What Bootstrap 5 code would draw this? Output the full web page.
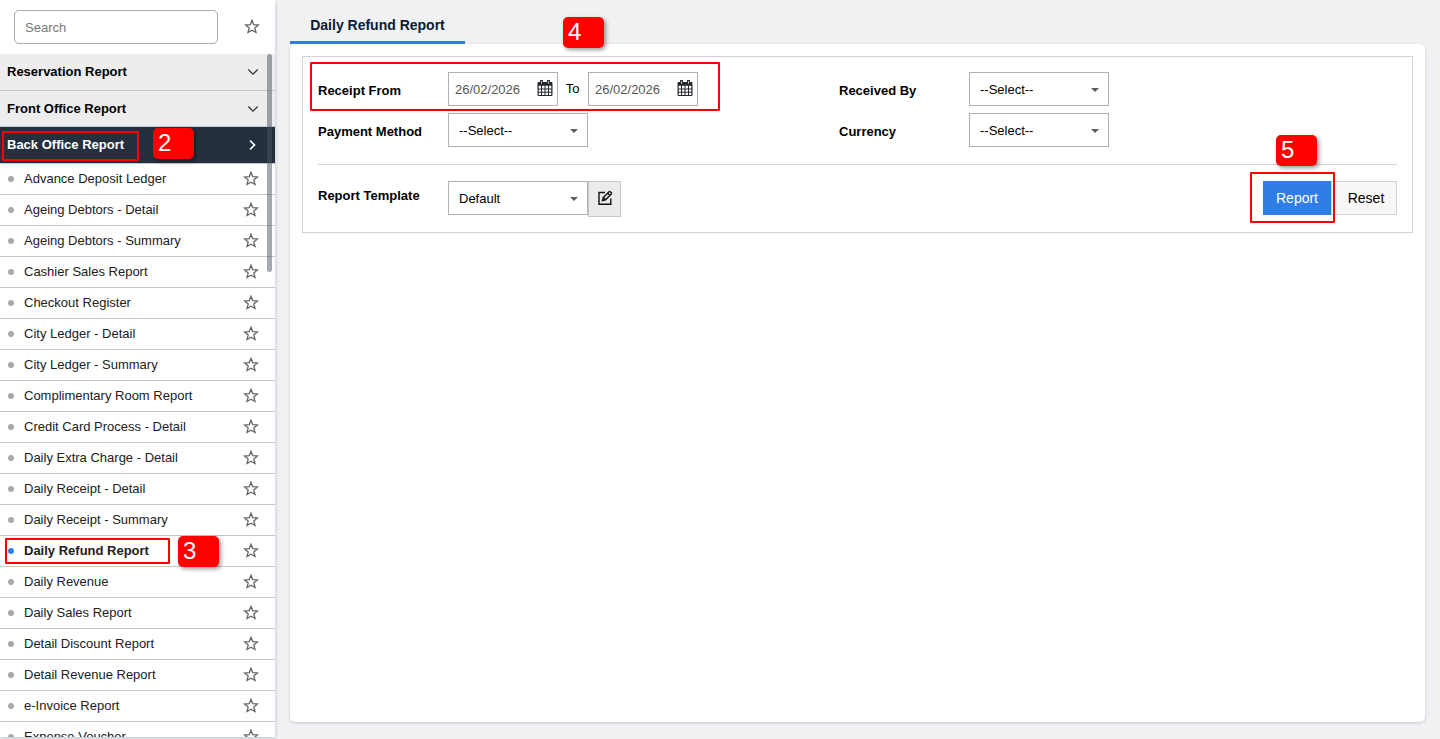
<!DOCTYPE html>
<html lang="en">

<head>
    <meta charset="UTF-8">
    <meta name="viewport" content="width=device-width, initial-scale=1.0">
    <title>Daily Refund Report</title>
    <link href="https://cdn.jsdelivr.net/npm/bootstrap@5.3.3/dist/css/bootstrap.min.css" rel="stylesheet">
    <style>
        body {
            height: 739px;
            background: #f0f1f3;
            color: #000;
            font: 13px/18px "Liberation Sans", Arial, sans-serif;
        }

        .report-sidebar {
            width: 275px;
            height: 737px;
            background: #fff;
            box-shadow: 0 1px 4px rgba(60, 75, 95, 0.3);
        }

        .search-bar {
            height: 54px;
            padding: 0 15px 0 14px;
        }

        .search-bar .form-control {
            width: 204px;
            height: 34px;
            padding: 0 10px;
            border: 1px solid #aaabae;
            border-radius: 5px;
            font-size: 13px;
        }

        .search-bar .form-control::placeholder {
            color: #777;
        }

        .group-head {
            height: 37px;
            padding: 0 16px 0 7px;
            background: #ededed;
            border-bottom: 1px solid #c5c8ca;
            font-weight: bold;
        }

        .group-head.second {
            height: 36px;
        }

        .group-head.open {
            background: #25303f;
            color: #fff;
            padding-bottom: 1px;
        }

        .report-items {
            height: 573px;
        }

        .report-list .list-group-item {
            height: 31px;
            padding: 0 16px 1px 8px;
            border: 0;
            border-bottom: 1px solid #c5c8ca;
            color: #212121;
        }

        .report-list .dot {
            width: 6px;
            height: 6px;
            margin-right: 10px;
            border-radius: 50%;
            background: #a9a9a9;
        }

        .report-list .current {
            font-weight: bold;
        }

        .report-list .current .dot {
            background: #2f7de6;
        }

        .scroll-thumb {
            left: 267px;
            top: 54px;
            width: 5px;
            height: 218px;
            border-radius: 3px;
            background: rgba(73, 84, 98, 0.5);
        }

        .report-main {
            padding: 9px 15px 17px 15px;
        }

        .report-tab {
            width: 175px;
            height: 35px;
            border-bottom: 3px solid #2f7de6;
            color: #0b1a33;
            font-size: 14px;
            font-weight: bold;
        }

        .report-panel {
            padding: 12px;
            background: #fff;
            border-radius: 5px;
            box-shadow: 0 1px 3px rgba(60, 75, 95, 0.25);
        }

        .filter-box {
            height: 177px;
            padding: 15px;
            border: 1px solid #d2d3d8;
        }

        .filter-col {
            width: 521px;
        }

        .filter-label {
            width: 130px;
            font-weight: bold;
            padding-top: 4px;
        }

        .filter-line {
            height: 34px;
            margin-bottom: 7px;
        }

        .date-box {
            width: 110px;
            height: 34px;
            padding: 2px 4px 0 6px;
            border: 1px solid #aeb0b6;
            color: #555;
        }

        .date-box svg {
            margin-bottom: 5px;
        }

        .to-label {
            width: 30px;
            padding-right: 1px;
        }

        .select-box {
            width: 140px;
            height: 34px;
            padding: 1px 9px 0 10px;
            border: 1px solid #aeb0b6;
        }

        .select-box::after {
            content: "";
            border: 4px solid transparent;
            border-top-color: #5e5e5e;
            border-bottom: 0;
        }

        .template-row {
            margin-top: 10px;
            padding-top: 16px;
            border-top: 1px solid #d2d3d8;
        }

        .template-row .filter-label {
            padding-top: 6px;
        }

        .edit-btn {
            width: 33px;
            height: 36px;
            padding-bottom: 2px;
            background: #ebebeb;
            border: 1px solid #c8c8c8;
        }

        .template-row .btn {
            height: 34px;
            padding: 0;
            border-radius: 0;
            font-size: 14px;
        }

        .template-row .btn-report {
            width: 68px;
            background: #2f7de6;
            color: #fff;
        }

        .template-row .btn-reset {
            width: 66px;
            padding-left: 4px;
            background: #f7f7f7;
            border: 1px solid #d2d3d8;
            color: #000;
        }

        /* numbered callouts drawn over the screen */
        .callout-box {
            position: absolute;
            border: 2px solid #f00;
            border-radius: 1px;
        }

        .callout-num {
            position: absolute;
            width: 41px;
            height: 31px;
            padding-left: 5px;
            border-radius: 5px;
            background: #f00;
            box-shadow: 2px 2px 4px rgba(0, 0, 0, 0.4);
            color: #fff;
            font-size: 24px;
            line-height: 29px;
        }

        .box-2 { left: 2px; top: 131px; width: 137px; height: 30px; }
        .box-3 { left: 5px; top: 538px; width: 165px; height: 26px; }
        .box-4 { left: 310px; top: 62px; width: 410px; height: 49px; }
        .box-5 { left: 1250px; top: 172px; width: 85px; height: 51px; }
        .num-2 { left: 153px; top: 128px; }
        .num-3 { left: 178px; top: 536px; }
        .num-4 { left: 563px; top: 17px; }
        .num-5 { left: 1276px; top: 135px; }
    </style>
</head>

<body class="d-flex overflow-hidden position-relative">

    <svg class="d-none">
        <symbol id="star" viewBox="0 0 16 16">
            <path d="M8 1.300l1.700 4.300 4.700.4-3.600 3 1.200 4.500L8 11.200l-4 2.300L5.200 9 1.600 6l4.700-.4z" fill="none" stroke="#666" stroke-width="1.3" />
        </symbol>
        <symbol id="chevron" viewBox="0 0 12 12">
            <path d="M1.300 3.500L6 8.200l4.700-4.700" fill="none" stroke="#2b2f36" stroke-width="1.2" />
        </symbol>
        <symbol id="calendar" viewBox="0 0 16 16">
            <rect x="1.100" y="2.600" width="13.800" height="12.900" rx=".8" fill="#fff" stroke="#25282d" stroke-width="1.2" />
            <path d="M1 2.200h14v3.600H1z" fill="#25282d" />
            <path d="M4.500 5.500v10M8 5.500v10M11.500 5.500v10M1 9h14M1 12.200h14" stroke="#25282d" />
            <path d="M4.500 1v2.800M11.500 1v2.800" stroke="#25282d" stroke-width="3" stroke-linecap="round" />
            <path d="M4.500 1.200v2.400M11.500 1.200v2.400" stroke="#d5d5d5" stroke-width="1" />
        </symbol>
    </svg>

    <aside class="report-sidebar flex-shrink-0 position-relative">
        <div class="search-bar d-flex align-items-center justify-content-between">
            <input type="text" class="form-control" placeholder="Search">
            <svg width="16" height="16"><use href="#star" /></svg>
        </div>
        <div class="group-head d-flex align-items-center justify-content-between">
            Reservation Report
            <svg width="12" height="12"><use href="#chevron" /></svg>
        </div>
        <div class="group-head second d-flex align-items-center justify-content-between">
            Front Office Report
            <svg width="12" height="12"><use href="#chevron" /></svg>
        </div>
        <div class="group-head open d-flex align-items-center justify-content-between">
            Back Office Report
            <svg width="12" height="12" viewBox="0 0 12 12"><path d="M3 1.500L7.500 6 3 10.500" fill="none" stroke="#fff" stroke-width="1.7" /></svg>
        </div>
        <div class="report-items overflow-hidden">
            <ul class="list-group list-group-flush report-list" id="reportList"></ul>
        </div>
        <div class="scroll-thumb position-absolute"></div>
    </aside>

    <main class="report-main flex-grow-1 d-flex flex-column">
        <div class="report-tab d-flex align-items-center justify-content-center">Daily Refund Report</div>
        <div class="report-panel flex-grow-1">
            <div class="filter-box">
                <div class="d-flex">
                    <div class="filter-col">
                        <div class="filter-line d-flex align-items-center">
                            <div class="filter-label">Receipt From</div>
                            <div class="date-box d-flex align-items-center justify-content-between">
                                26/02/2026
                                <svg width="16" height="16"><use href="#calendar" /></svg>
                            </div>
                            <div class="to-label text-center">To</div>
                            <div class="date-box d-flex align-items-center justify-content-between">
                                26/02/2026
                                <svg width="16" height="16"><use href="#calendar" /></svg>
                            </div>
                        </div>
                        <div class="filter-line d-flex align-items-center">
                            <div class="filter-label">Payment Method</div>
                            <div class="select-box d-flex align-items-center justify-content-between">--Select--</div>
                        </div>
                    </div>
                    <div class="filter-col">
                        <div class="filter-line d-flex align-items-center">
                            <div class="filter-label">Received By</div>
                            <div class="select-box d-flex align-items-center justify-content-between">--Select--</div>
                        </div>
                        <div class="filter-line d-flex align-items-center">
                            <div class="filter-label">Currency</div>
                            <div class="select-box d-flex align-items-center justify-content-between">--Select--</div>
                        </div>
                    </div>
                </div>
                <div class="template-row d-flex align-items-start">
                    <div class="filter-label">Report Template</div>
                    <div class="select-box d-flex align-items-center justify-content-between">Default</div>
                    <div class="edit-btn d-flex align-items-center justify-content-center">
                        <svg width="16" height="16" viewBox="0 0 16 16" fill="none" stroke="#111" stroke-width="1.4">
                            <path d="M8 2.500H2v11.800h11.800V8.500" />
                            <path d="M5.500 10.500l.7-3L12 1.700q.6-.5 1.200 0l1.100 1.100q.5.600 0 1.200L8.500 9.800zM10.600 3.200l2.300 2.300M6.200 7.500l2.300 2.300" />
                        </svg>
                    </div>
                    <button type="button" class="btn btn-report border-0 ms-auto">Report</button>
                    <button type="button" class="btn btn-reset">Reset</button>
                </div>
            </div>
        </div>
    </main>

    <div class="callout-box box-2"></div>
    <div class="callout-box box-3"></div>
    <div class="callout-box box-4"></div>
    <div class="callout-box box-5"></div>
    <div class="callout-num num-2">2</div>
    <div class="callout-num num-3">3</div>
    <div class="callout-num num-4">4</div>
    <div class="callout-num num-5">5</div>

    <script>
        const reports = [
            "Advance Deposit Ledger",
            "Ageing Debtors - Detail",
            "Ageing Debtors - Summary",
            "Cashier Sales Report",
            "Checkout Register",
            "City Ledger - Detail",
            "City Ledger - Summary",
            "Complimentary Room Report",
            "Credit Card Process - Detail",
            "Daily Extra Charge - Detail",
            "Daily Receipt - Detail",
            "Daily Receipt - Summary",
            "Daily Refund Report",
            "Daily Revenue",
            "Daily Sales Report",
            "Detail Discount Report",
            "Detail Revenue Report",
            "e-Invoice Report",
            "Expense Voucher"
        ];

        const list = document.getElementById("reportList");

        reports.forEach(name => {
            const li = document.createElement("li");
            li.className = "list-group-item d-flex align-items-center";
            if (name === "Daily Refund Report") {
                li.classList.add("current");
            }
            li.innerHTML = `<span class="dot"></span>${name}<svg class="ms-auto" width="16" height="16"><use href="#star" /></svg>`;
            list.appendChild(li);
        });
    </script>

    <script src="https://cdn.jsdelivr.net/npm/bootstrap@5.3.3/dist/js/bootstrap.bundle.min.js"></script>

</body>

</html>
